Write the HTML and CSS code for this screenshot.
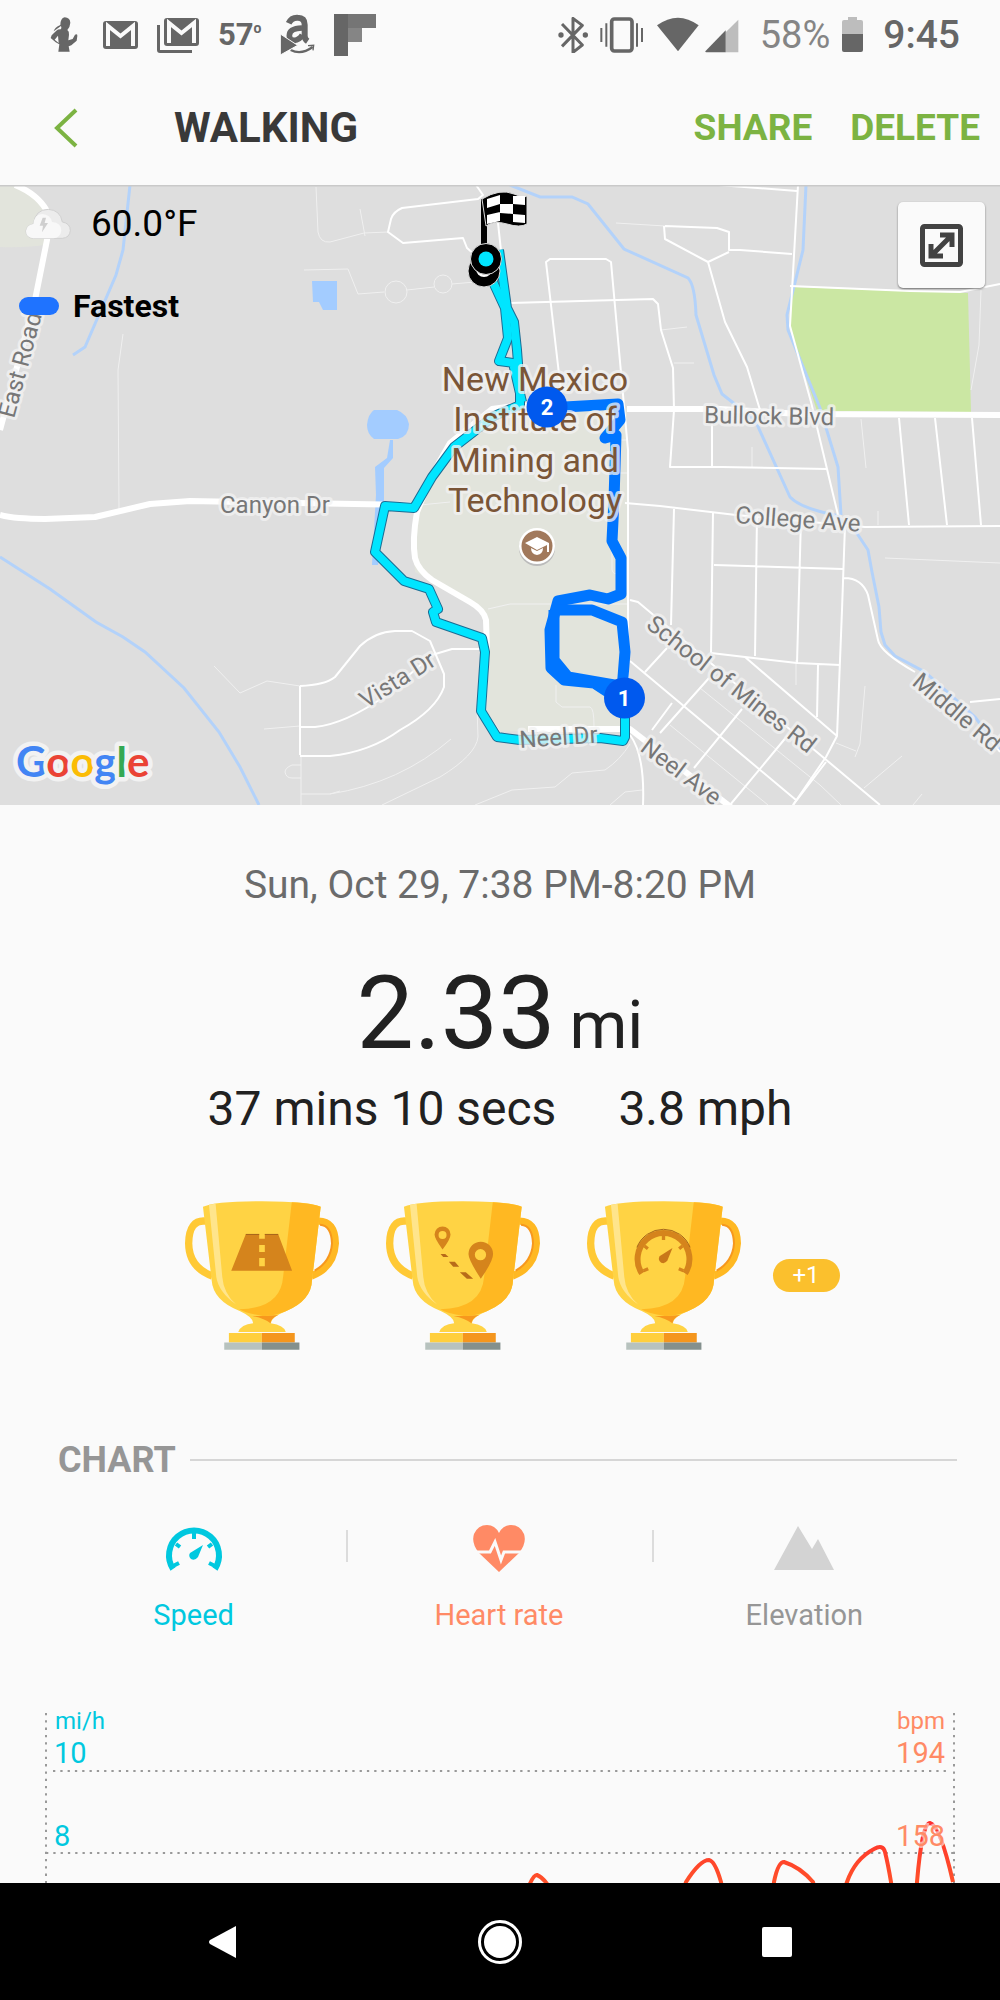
FILE: index.html
```html
<!DOCTYPE html>
<html lang="en">
<head>
<meta charset="utf-8">
<meta name="viewport" content="width=device-width, initial-scale=1">
<title>Walking</title>
<link rel="stylesheet" href="styles.css">
</head>
<body>
<div class="status-bar">
  <div class="status-left">
    <svg width="34" height="36" viewBox="148 50 102 108" fill="#666"><path d="M192 51q16 1 17 16q-1 14-9 22q6 4 5 14l-2 17l13-4l7-13q8-4 7 4l-2 14l-16 14l-8 3l3 16h-34l3-22l-11-6l-15-13l3-8l14-14q4-4 13-4q4-3 1-10l-22 16q3-12 20-19q0-20 13-23zM172 106l-10 12l12 10z" fill-rule="evenodd"/></svg>
    <svg width="35" height="28" viewBox="0 0 35 28"><rect width="35" height="28" rx="3" fill="#666"/><path d="M5 25V5l12.500 10L30 5v20" fill="none" stroke="#fafafa" stroke-width="4"/></svg>
    <svg width="42" height="35" viewBox="0 0 42 35"><rect x="7" width="35" height="28" rx="3" fill="#666"/><path d="M12 25V5l12.500 10L37 5v20" fill="none" stroke="#fafafa" stroke-width="4"/><path d="M1.500 7v25a1.500 1.500 0 0 0 1.500 1.500h32" fill="none" stroke="#666" stroke-width="3"/></svg>
    <span class="outdoor">57<sup>o</sup></span>
    <svg width="35" height="42" viewBox="836 38 105 126"><g fill="none" stroke="#666"><path d="M862 66q8-18 27-17q21 0 21 21v34q0 10 9 16" stroke-width="18"/><path d="M902 80q-38 1-38 23q0 14 15 14q15-1 24-16" stroke-width="17"/><path d="M868 146q32 16 66-9" stroke-width="7"/><path d="M920 133l17-1l-2 15" stroke-width="4"/></g><path d="M837 98l52 34l-52 29z" fill="#666" stroke="#fafafa" stroke-width="3"/></svg>
    <svg width="42" height="42" viewBox="0 0 42 42"><path fill="#666" d="M0 0h14v42H0z"/><path fill="#757575" d="M14 0h28v14H14z"/><path fill="#858585" d="M14 14h14v14H14z"/></svg>
  </div>
  <div class="status-right">
    <svg width="30" height="36" viewBox="173 48 90 108"><path d="M185 69l61 63l-28 22V52l28 21l-61 63" fill="none" stroke="#666" stroke-width="9" stroke-linejoin="round"/><circle cx="182" cy="102" r="8" fill="#666"/><circle cx="255" cy="102" r="8" fill="#666"/></svg>
    <svg width="44" height="36" viewBox="303 48 132 108" fill="none" stroke="#666"><rect x="338" y="54" width="61" height="96" rx="8" stroke-width="11"/><path d="M307 81v42M322 67v70M414 67v70M429 81v42" stroke-width="6"/></svg>
    <svg width="84" height="36" viewBox="474 48 252 108"><path fill="#666" d="M477 73q63-46 125 0l-62 78z"/><path fill="#bdbdbd" d="M683 94l38-38v98h-38z"/><path fill="#666" d="M622 151l61-63v66h-58q-4 0-3-3z"/></svg>
    <span class="percent">58%</span>
    <svg width="21" height="36" viewBox="0 0 21 36"><path fill="#bdbdbd" d="M6 0h9v3h4q2 0 2 2v13H0V5q0-2 2-2h4z"/><path fill="#666" d="M0 17h21v16q0 2-2 2H2q-2 0-2-2z"/></svg>
    <span class="clock">9:45</span>
  </div>
</div>

<header class="app-bar">
  <button class="back" aria-label="Back"><svg width="24" height="40" viewBox="0 0 24 40"><path d="M22 2L3 20l19 18" fill="none" stroke="#7cb342" stroke-width="4"/></svg></button>
  <h1 class="title">WALKING</h1>
  <button class="action">SHARE</button>
  <button class="action">DELETE</button>
</header>

<main class="content">
  <section class="map" aria-label="Route map">
    <svg class="map-canvas" viewBox="0 185 1000 620">
      <rect y="185" width="1000" height="620" fill="#dedede"/>
      <path d="M0 185h20q24 12 31 34l-2 25q-20 4-49 3z" fill="#e2e4dc"/>
      <path d="M418 512L432 478L452 445L492 410L520 406L627 408L628 727L498 732L485 707L488 625L482 608L415 572L413 545Z" fill="#e2e4dc"/>
      <path d="M792 287L968 293L971 412L817 411L790 328Z" fill="#cbe7a3"/>

      <!-- water -->
      <g fill="#a3ccff">
        <path d="M312 281h25v29h-14l-4-8h-6z"/>
        <path d="M374 410h23q10 4 12 14q0 12-11 15h-24q-7-5-7-14q1-11 7-15z"/>
        <path d="M390 440h3v18l-9 10v35l-6 62h-6l4-70l-1-28l12-9z"/>
      </g>
      <g class="stream">
        <path d="M130 185L123 250L116 275L85 347L73 355"/>
        <path d="M0 557L50 589L96 622L123 637L145 652L184 688L219 732L240 767L259 805"/>
        <path d="M510 185L540 197H572L588 204L624 249L688 278Q695 285 696 315L714 375L722 394L755 420L790 497Q800 508 835 515L856 532L868 550L872 572L879 607L881 632L885 645L895 656L925 672L975 717L1000 750"/>
        <path d="M806 185L803 250L787 315L788 330L820 408L838 467L841 515"/>
      </g>

      <!-- minor roads -->
      <g class="lane">
        <path d="M316 187L318 232Q320 243 330 242L364 233L388 232"/>
        <path d="M304 270L348 269L358 294L384 292M407 290L434 287M452 284L475 282M360 209L365 236"/>
        <circle cx="396" cy="292" r="11"/><circle cx="443" cy="284" r="9"/>
        <path d="M123 334L118 370L119 509M616 223L665 226M661 330L687 327M674 363H694M861 419L866 468M752 447V467M981 290L979 345L971 390"/>
        <path d="M214 666L240 693L267 681L300 686M264 729L300 726M301 765H292Q285 768 285 772Q286 778 292 778H301M301 794H330L340 791M301 755V805"/>
        <path d="M488 609L510 604H627M556 685V702L562 707H590Q594 708 594 726M612 550V570Q614 576 618 572M616 440H627M616 473H627"/>
        <path d="M330 794Q400 783 451 739M382 805L440 777Q476 755 478 737L477 707M475 805L512 790L555 787L572 773L605 770Q620 760 630 744M610 805L625 792L642 790"/>
        <path d="M700 688L820 785L841 805M670 725L768 805M885 558L1000 563M865 686L860 744L855 757M836 743L856 751M902 756L864 788M922 794L913 805M796 660V685M878 511V525M420 505L450 502"/>
      </g>
      <g class="street">
        <path d="M476 185L483 195L478 199L402 208Q393 212 391 219L388 232L403 243L463 238L467 248L475 255"/>
        <path d="M498 223L502 260M510 303L653 299L658 304L661 330L673 368L674 410L670 467H722L827 469"/>
        <path d="M562 400L546 262L550 259L606 259L611 262L628 450"/>
        <path d="M718 185L797 191M665 226L717 228L729 232V250L740 250L792 254M664 226L665 239L708 262L725 322L747 367L760 410M708 262L729 252"/>
        <path d="M798 185L790 326L811 402L838 515"/>
        <path d="M790 286L910 291L960 292L1000 284"/>
        <path d="M899 418L909 525M935 418L947 525M972 418L981 525M712 418V467"/>
        <path d="M625 503L660 506L736 515L844 525L865 527L1000 526"/>
        <path d="M674 509L671 625M713 512L711 653M757 515L755 656M801 518L797 663M845 525L842 610L837 736M714 565L843 569M844 578Q862 578 868 595L878 640Q880 652 915 672"/>
        <path d="M711 653L745 657L797 663L840 665M745 657L837 736L826 757L793 805M818 665L817 717"/>
        <path d="M630 600L638 602L880 805M630 661L796 800M709 678L660 733M742 709L694 768M788 735L730 805M826 762L793 805M667 648L645 672M672 703L652 730"/>
        <path d="M300 686V755M300 686Q325 685 335 677L360 646Q375 632 395 631H412L430 641L444 674V687Q436 710 400 730Q370 752 330 756H300M300 727H315Q345 724 385 696L432 655L452 649H480"/>
        <path d="M970 702L1000 699M992 742L1000 752M630 735Q645 755 643 805"/>
        <path d="M628 450V730"/>
      </g>
      <g class="road">
        <path d="M0 515Q15 519 45 519L95 517L150 504L190 501L412 505"/>
        <path d="M417 512Q412 540 415 558Q418 570 432 580L470 602Q484 610 486 620L487 650L483 711L500 737"/>
        <path d="M417 512L432 475L450 443L492 409L520 405L550 409"/>
        <path d="M627 409H720L800 414L1000 415"/>
        <path d="M528 729H630L732 808"/>
        <path d="M15 185Q40 195 49 215L47 240L35 300L0 430"/>
      </g>

      <!-- walked route -->
      <g class="route-edge">
        <path d="M499 250L507 308L514 322L517 350L520 390L520 405L494 416L454 447L432 477L414 508L385 506L375 552L404 581L429 589L438 609L433 612L436 622L482 638L485 652L481 711L497 737L520 740L600 738L623 741L625 737V695"/>
        <path d="M493 282L505 308L508 338L499 361L513 363L522 402"/>
      </g>
      <g class="route">
        <path d="M499 250L507 308L514 322L517 350L520 390L520 405L494 416L454 447L432 477L414 508L385 506L375 552L404 581L429 589L438 609L433 612L436 622L482 638L485 652L481 711L497 737L520 740L600 738L623 741L625 737V695"/>
        <path d="M493 282L505 308L508 338L499 361L513 363L522 402"/>
      </g>
      <g class="route-fast">
        <path d="M547 408L618 404L620 420L605 438L616 435L614 500L612 541L621 558V594L608 599L590 595L558 601L550 630L551 668L564 680L594 683L620 700"/>
        <path d="M558 610H592L622 622L625 652L622 690M554 610V660L568 677L620 686"/>
      </g>

      <!-- place and street names -->
      <g class="place">
        <text x="535" y="391">New Mexico</text><text x="535" y="431">Institute of</text>
        <text x="535" y="472">Mining and</text><text x="535" y="512">Technology</text>
      </g>
      <g class="label">
        <text x="220" y="513">Canyon Dr</text>
        <text transform="translate(704 423) rotate(1)">Bullock Blvd</text>
        <text transform="translate(735 523) rotate(4)">College Ave</text>
        <text transform="translate(645 627) rotate(38)">School of Mines Rd</text>
        <text transform="translate(639 750) rotate(37)">Neel Ave</text>
        <text transform="translate(911 684) rotate(40)">Middle Rd</text>
        <text transform="translate(366 709) rotate(-32)">Vista Dr</text>
        <text transform="translate(520 748) rotate(-4)">Neel Dr</text>
        <text transform="translate(14 419) rotate(-75)">East Road</text>
      </g>
      <text class="google" x="16" y="777"><tspan fill="#4285f4">G</tspan><tspan fill="#ea4335">o</tspan><tspan fill="#fbbc05">o</tspan><tspan fill="#4285f4">g</tspan><tspan fill="#34a853">l</tspan><tspan fill="#ea4335">e</tspan></text>

      <!-- markers -->
      <circle cx="537" cy="548" r="18" fill="#bbb"/><circle cx="537" cy="546" r="18" fill="#fff"/><circle cx="537" cy="546" r="15.500" fill="#a1795c"/>
      <path d="M525 543l12-6l12 6v9h-2v-7l-10 5z" fill="#fff"/><path d="M531 548l6 3l6-3q0 6-6 7q-6-1-6-7z" fill="#fff"/>
      <circle cx="484" cy="271" r="16" fill="#000" stroke="#ddd"/><circle cx="484" cy="269" r="8" fill="#fff"/>
      <path d="M484 246V199" stroke="#000" stroke-width="6"/>
      <path d="M482 199Q500 188 514 194T527 194V224Q520 228 507 224T486 226Z" fill="#000" stroke="#ddd" stroke-width="1"/>
      <path d="M487 199l13-4v9l-13 4zM513 196l12 0v9l-12-1zM500 204l13 0v10l-13-1zM487 216v-1l13-3v9l-13 3zM513 214l12 1v8l-12-1z" fill="#fff"/>
      <circle cx="486" cy="259" r="15.500" fill="#000" stroke="#ddd"/><circle cx="486" cy="259" r="7.500" fill="#00e5ff"/>
      <circle cx="547" cy="407" r="20.500" fill="#0059ee"/><circle cx="624.500" cy="698" r="20.500" fill="#0059ee"/>
      <g class="marker-text"><text x="547" y="415">2</text><text x="624" y="706">1</text></g>
      <path d="M0 185.500h1000" stroke="#c9c9c9" stroke-width="2"/>
    </svg>
    <div class="legend">
      <div class="legend-row weather">
        <svg width="46" height="32" viewBox="75 93 138 94"><path d="M100 183q-22-2-22-22q2-18 22-21q6-44 45-44q36 2 42 38q24 4 24 26q-2 21-24 23z" fill="#ececec" stroke="#d0d0d0" stroke-width="3"/><path d="M100 183q-22-2-22-22q2-18 22-21q4-30 26-30q26 2 30 24q28 2 28 26q-3 21-24 23z" fill="#f8f8f8"/><path d="M138 121h-10l-9 24h10l-3 20l18-28h-10z" fill="#cfcfcf"/></svg>
        <span>60.0°F</span>
      </div>
      <div class="legend-row fastest"><i class="swatch"></i><span>Fastest</span></div>
    </div>
    <button class="expand" aria-label="Expand map"><svg width="43" height="43" viewBox="0 0 43 43"><rect x="2.500" y="2.500" width="38" height="38" rx="2" fill="none" stroke="#424242" stroke-width="5"/><path d="M12 31L31 12M20 11h12v12M11 20v12h12" fill="none" stroke="#424242" stroke-width="5"/></svg></button>
  </section>

  <section class="summary">
    <p class="date">Sun, Oct 29, 7:38 PM-8:20 PM</p>
    <p class="distance">2.33<span class="unit">mi</span></p>
    <p class="stats"><span>37 mins 10 secs</span><span>3.8 mph</span></p>
    <div class="awards">
      <svg class="trophy" viewBox="42 63 463 447">
        <defs><g id="cup">
          <path d="M104 123Q54 118 53 190Q54 262 124 288" fill="none" stroke="#ffc935" stroke-width="22"/>
          <path d="M442 123Q493 122 494 190Q490 262 422 288" fill="none" stroke="#ffb822" stroke-width="22"/>
          <path d="M448 134Q482 136 484 190Q480 245 432 272" fill="none" stroke="#f7981d" stroke-width="6"/>
          <path d="M96 80Q130 63 273 63Q420 64 450 80L424 300Q422 362 345 394Q300 412 300 430Q340 436 345 456H202Q210 434 247 430Q247 412 208 394Q126 362 122 300Z" fill="#ffd344"/>
          <path d="M363 66Q430 70 450 80L424 300Q422 362 345 394Q305 410 275 408Q225 400 205 388Q330 385 337 290Z" fill="#ffb822"/>
          <path d="M245 408Q275 410 322 405Q300 415 299 430Q280 415 245 408Z" fill="#f7981d"/>
          <path d="M114 74L134 71L154 290Q158 340 196 374Q142 335 136 290Z" fill="#ffe58c"/>
          <path d="M174 459h99v29h-99z" fill="#ffcf3d"/><path d="M273 459h99v29h-99z" fill="#f4961e"/>
          <path d="M160 488h113v22H160z" fill="#b7c2be"/><path d="M273 488h113v22H273z" fill="#84908d"/>
        </g></defs>
        <use href="#cup"/>
        <path d="M225 162h40v14h17v-14h40l42 110H181z" fill="#d5841c"/><path d="M225 163h40M282 163h40" stroke="#a7651a" stroke-width="3"/>
        <path d="M265 195h17v21h-17zM265 234h17v25h-17z" fill="#ffd344"/>
      </svg>
      <svg class="trophy" viewBox="42 63 463 447"><use href="#cup"/><g fill="#d5841c"><path fill-rule="evenodd" d="M212 208Q188 175 188 163A24 24 0 0 1 236 163Q236 177 212 208ZM200 165a12 12 0 1 0 24 0a12 12 0 1 0-24 0z"/><path fill-rule="evenodd" d="M327 296Q290 240 290 222A37 37 0 0 1 364 222Q364 244 327 296ZM309 224a17 17 0 1 0 34 0a17 17 0 1 0-34 0z"/></g><path fill="#b86b19" d="M206 222h14l10 9h-16zM231 245h18l13 15h-18zM264 277h18l22 19h-19z"/></svg>
      <svg class="trophy" viewBox="42 63 463 447"><use href="#cup"/><g fill="none" stroke="#d5841c"><path d="M207 280A78 78 0 1 1 337 280" stroke-width="18"/><path d="M272 160v20M215 198l10 8M329 198l-10 8M212 272l14-6M332 272l-14-6" stroke-width="10"/></g><path d="M192 202A86 86 0 0 1 352 202" fill="none" stroke="#a7651a" stroke-width="3"/><path d="M299 204l-15 37q-7 12-19 7q-11-7-5-19z" fill="#c97819"/></svg>
      <span class="more">+1</span>
    </div>
  </section>

  <section class="chart">
    <h2 class="chart-title">CHART</h2>
    <div class="tabs">
      <button class="tab speed"><svg width="60" height="48" viewBox="0 0 60 48"><path d="M9 44A25 25 0 1 1 51 44" fill="none" stroke="currentColor" stroke-width="6"/><path d="M30 8v6M12 19l4 3M48 19l-4 3M9 41l6-3M51 41l-6-3" stroke="currentColor" stroke-width="4"/><path d="M39 20l-5 12q-3 4-7 2q-3-3-1-6z" fill="currentColor"/></svg>Speed</button>
      <button class="tab heart"><svg width="54" height="48" viewBox="0 0 54 48"><path d="M27 47L7 28Q-1 18 2 9Q6 0 15 0Q23 0 27 8Q31 0 39 0Q48 0 52 9Q55 18 47 28Z" fill="currentColor"/><path d="M4 27h14l5-10l6 18l3-8h18" fill="none" stroke="#fafafa" stroke-width="3"/></svg>Heart rate</button>
      <button class="tab elevation"><svg width="60" height="48" viewBox="0 0 60 48"><path d="M0 45L24 1l14 23l6-10l16 31z" fill="#d3d3d3"/></svg>Elevation</button>
    </div>
    <svg class="plot" viewBox="0 1700 1000 360">
      <defs><linearGradient id="heat" gradientUnits="userSpaceOnUse" x1="0" y1="1820" x2="0" y2="1890"><stop offset="0" stop-color="#ff2d2d"/><stop offset="1" stop-color="#ff5429"/></linearGradient></defs>
      <path class="grid" d="M46 1714V2060M954 1714V2060M53 1772H948M46 1854H954M46 1937H954M46 2020H954"/>
      <path d="M510 1960Q528 1874 537 1876Q548 1880 560 1910Q610 2040 640 2000Q672 1930 686 1883Q700 1861 709 1861Q715 1862 721 1883Q745 2010 758 1990Q768 1950 774 1883Q778 1863 784 1863Q800 1868 813 1883Q828 1940 847 1883Q855 1860 874 1850Q883 1845 885 1853Q888 1865 891 1883Q905 2030 917 1883Q922 1824 930 1824Q940 1826 953 1883" fill="none" stroke="url(#heat)" stroke-width="4"/>
      <g class="axis"><text class="axis-unit" x="55" y="1730">mi/h</text><text x="54" y="1764">10</text><text x="54" y="1847">8</text></g>
      <g class="axis axis-bpm"><text class="axis-unit" x="945" y="1730">bpm</text><text x="945" y="1764">194</text><text x="945" y="1847">158</text></g>
    </svg>
  </section>
</main>

<nav class="nav-bar">
  <button aria-label="Back"><svg width="48" height="48" viewBox="0 0 48 48"><path d="M37 8v32L11 26q-2-2 0-4z" fill="#fff"/></svg></button>
  <button aria-label="Home"><svg width="48" height="48" viewBox="0 0 48 48"><circle cx="24" cy="24" r="20.500" fill="none" stroke="#fff" stroke-width="3"/><circle cx="24" cy="24" r="16" fill="#fff"/></svg></button>
  <button aria-label="Recent apps"><svg width="48" height="48" viewBox="0 0 48 48"><rect x="9" y="9" width="30" height="30" rx="2" fill="#fff"/></svg></button>
</nav>
</body>
</html>
```
FILE: styles.css
```css
* { box-sizing: border-box; }

body {
  margin: 0;
  height: 100vh;
  display: flex;
  flex-direction: column;
  background: #fafafa;
  color: #212121;
  font-family: Roboto, "Liberation Sans", sans-serif;
}

button {
  border: 0;
  padding: 0;
  background: none;
  font: inherit;
  color: inherit;
}

svg { display: block; }
p, h1, h2 { margin: 0; }

.status-bar {
  display: flex;
  justify-content: space-between;
  align-items: center;
  height: 70px;
  padding: 0 40px 0 50px;
  color: #666;
}

.status-left { display: flex; align-items: center; gap: 19px; }
.status-right { display: flex; align-items: center; gap: 12px; }
.outdoor { font-size: 31px; font-weight: 700; line-height: 36px; }
.outdoor sup { font-size: 14px; line-height: 14px; vertical-align: 12px; }
.percent { margin-left: 8px; font-size: 38px; color: #858585; }
.clock { margin-left: 8px; font-size: 39px; font-weight: 500; }

.app-bar {
  display: flex;
  align-items: center;
  height: 115px;
  padding: 0 20px 0 54px;
  color: #7cb342;
}

.back { margin-right: 96px; }
.title { flex: 1; font-size: 42px; font-weight: 700; color: #393939; }
.action { margin-left: 38px; font-size: 37px; font-weight: 700; }

.content {
  flex: 1;
  min-height: 0;
  overflow-y: auto;
  scrollbar-width: none;
}

.map { position: relative; overflow: hidden; }
.map-canvas { width: 100%; height: auto; }
.stream { fill: none; stroke: #b3d2fa; stroke-width: 3; }
.lane { fill: none; stroke: #f0f0f0; stroke-width: 1; }
.street { fill: none; stroke: #fff; stroke-width: 2; stroke-linejoin: round; }
.road { fill: none; stroke: #fff; stroke-width: 6; stroke-linejoin: round; }
.route-edge { fill: none; stroke: #1a6c94; stroke-width: 10; stroke-linejoin: round; }
.route { fill: none; stroke: #00e5ff; stroke-width: 8; stroke-linejoin: round; }
.route-fast { fill: none; stroke: #0075ff; stroke-width: 11; stroke-linejoin: round; }
.label, .place {
  fill: #777;
  font-size: 24px;
  stroke: rgba(242, 242, 242, .75);
  stroke-width: 6px;
  stroke-linejoin: round;
  paint-order: stroke;
}
.place { fill: #7a5537; font-size: 34px; text-anchor: middle; }
.google {
  font-family: Lato, sans-serif;
  font-size: 42px;
  font-weight: 700;
  stroke: #f2f2f2;
  stroke-width: 9px;
  stroke-linejoin: round;
  paint-order: stroke;
}
.marker-text { fill: #fff; font-size: 22px; font-weight: 700; text-anchor: middle; }

.legend { position: absolute; top: 17px; left: 19px; color: #000; }
.legend-row { display: flex; align-items: center; }
.weather { gap: 20px; padding-left: 6px; font-size: 37px; line-height: 44px; }
.fastest { gap: 14px; margin-top: 42px; font-size: 32px; font-weight: 700; line-height: 36px; }
.swatch { width: 40px; height: 18px; border-radius: 9px; background: #1f73ff; }

.expand {
  position: absolute;
  top: 17px;
  right: 15px;
  width: 87px;
  height: 86px;
  display: grid;
  place-items: center;
  border-radius: 5px;
  background: #fafafa;
  box-shadow: 0 1px 2px rgba(0, 0, 0, .5);
}

.summary { padding-top: 56px; text-align: center; }
.date { font-size: 39px; line-height: 48px; color: #6b6b6b; }
.distance {
  display: flex;
  justify-content: center;
  align-items: baseline;
  gap: 14px;
  margin-top: 44px;
  font-size: 102px;
  line-height: 120px;
}
.unit { font-size: 66px; line-height: 66px; }
.stats { display: flex; justify-content: center; gap: 62px; margin-top: 6px; font-size: 48px; line-height: 60px; }

.awards {
  display: flex;
  justify-content: center;
  align-items: center;
  gap: 47px;
  margin-top: 62px;
  padding-left: 24px;
}
.trophy { width: 154px; height: 149px; }
.more {
  width: 67px;
  margin-left: -15px;
  border-radius: 17px;
  background: #fbc02d;
  color: #fff;
  font-size: 24px;
  line-height: 33px;
}

.chart { padding-top: 88px; }
.chart-title {
  display: flex;
  align-items: center;
  gap: 14px;
  margin: 0 43px 0 58px;
  font-size: 36px;
  line-height: 44px;
  color: #969696;
}
.chart-title::after { content: ""; flex: 1; height: 2px; background: #d6d6d6; }

.tabs {
  display: grid;
  grid-template-columns: repeat(3, 1fr);
  margin: 43px 43px 66px 41px;
}
.tab {
  position: relative;
  display: flex;
  flex-direction: column;
  align-items: center;
  gap: 24px;
  font-size: 29px;
  line-height: 36px;
}
.tab + .tab::before {
  content: "";
  position: absolute;
  left: 0;
  top: 5px;
  width: 2px;
  height: 32px;
  background: #dcdcdc;
}
.speed { color: #00c8df; }
.heart { color: #ff8a65; }
.elevation { color: #969696; }

.plot { width: 100%; height: auto; }
.grid { fill: none; stroke: #999; stroke-width: 2; stroke-dasharray: 2.3 5; }
.axis { fill: #00c8df; font-size: 29px; }
.axis-unit { font-size: 24px; }
.axis-bpm {
  fill: #ff8a65;
  text-anchor: end;
  stroke: rgba(250, 250, 250, .6);
  stroke-width: 4px;
  paint-order: stroke;
}

.nav-bar {
  display: flex;
  justify-content: space-around;
  align-items: center;
  height: 117px;
  padding: 0 84px;
  background: #000;
}
```
